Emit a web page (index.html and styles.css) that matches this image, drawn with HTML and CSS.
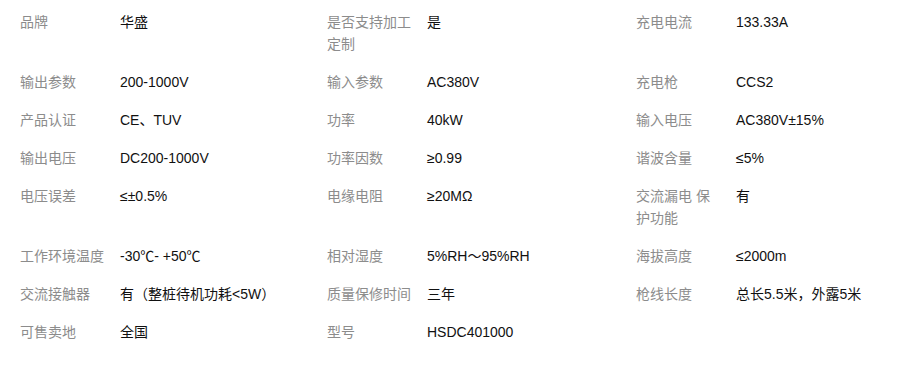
FILE: index.html
```html
<!DOCTYPE html>
<html lang="zh">
<head>
<meta charset="utf-8">
<link rel="stylesheet" href="styles.css">
</head>
<body>
<div class="specs">
  <div class="item"><span class="label">品牌</span><span class="value">华盛</span></div>
  <div class="item"><span class="label">是否支持加工定制</span><span class="value">是</span></div>
  <div class="item"><span class="label">充电电流</span><span class="value">133.33A</span></div>

  <div class="item"><span class="label">输出参数</span><span class="value">200-1000V</span></div>
  <div class="item"><span class="label">输入参数</span><span class="value">AC380V</span></div>
  <div class="item"><span class="label">充电枪</span><span class="value">CCS2</span></div>

  <div class="item"><span class="label">产品认证</span><span class="value">CE、TUV</span></div>
  <div class="item"><span class="label">功率</span><span class="value">40kW</span></div>
  <div class="item"><span class="label">输入电压</span><span class="value">AC380V±15%</span></div>

  <div class="item"><span class="label">输出电压</span><span class="value">DC200-1000V</span></div>
  <div class="item"><span class="label">功率因数</span><span class="value">≥0.99</span></div>
  <div class="item"><span class="label">谐波含量</span><span class="value">≤5%</span></div>

  <div class="item"><span class="label">电压误差</span><span class="value">≤±0.5%</span></div>
  <div class="item"><span class="label">电缘电阻</span><span class="value">≥20MΩ</span></div>
  <div class="item"><span class="label">交流漏电 保护功能</span><span class="value">有</span></div>

  <div class="item"><span class="label">工作环境温度</span><span class="value">-30℃- +50℃</span></div>
  <div class="item"><span class="label">相对湿度</span><span class="value">5%RH～95%RH</span></div>
  <div class="item"><span class="label">海拔高度</span><span class="value">≤2000m</span></div>

  <div class="item"><span class="label">交流接触器</span><span class="value">有（整桩待机功耗&lt;5W）</span></div>
  <div class="item"><span class="label">质量保修时间</span><span class="value">三年</span></div>
  <div class="item"><span class="label">枪线长度</span><span class="value">总长5.5米，外露5米</span></div>

  <div class="item"><span class="label">可售卖地</span><span class="value">全国</span></div>
  <div class="item"><span class="label">型号</span><span class="value">HSDC401000</span></div>
</div>
</body>
</html>
```

FILE: styles.css
```css
html, body {
  margin: 0;
  padding: 0;
  background: #fff;
}

body {
  font-family: "Liberation Sans", Arial, "Noto Sans CJK SC", sans-serif;
  font-size: 14px;
  line-height: 22px;
  color: #000;
}

.specs {
  display: grid;
  grid-template-columns: 307px 309px 284px;
  padding: 3px 0 0 20px;
}

.item {
  display: flex;
  align-items: flex-start;
  padding: 8px 0;
}

.label {
  flex: 0 0 86px;
  margin-right: 14px;
  color: #8c8c8c;
}

.value {
  flex: 1 1 auto;
  color: #111;
}
```
